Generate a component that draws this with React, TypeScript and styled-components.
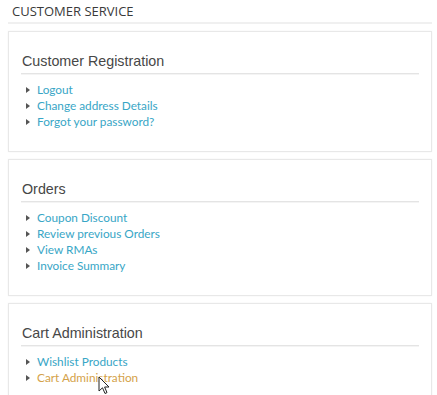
import React from "react";
import styled, { createGlobalStyle } from "styled-components";

const GlobalStyle = createGlobalStyle`
  html, body { margin: 0; padding: 0; background: #ffffff; }
  body { font-family: "Liberation Sans", Arial, sans-serif; }
`;

const Page = styled.div`
  position: relative;
  width: 437px;
  height: 395px;
  overflow: hidden;
  padding: 0 5px 0 8px;
  box-sizing: border-box;
`;

const Title = styled.div`
  font-family: "Open Sans", sans-serif;
  font-size: 13px;
  line-height: 18px;
  color: #3a3a3a;
  padding: 2px 4px 2px;
  border-bottom: 2px solid #f0f0f0;
  margin-bottom: 7px;
`;

const Panel = styled.section`
  border: 1px solid #e8e8e8;
  box-shadow: 0 0 2px rgba(0, 0, 0, 0.05);
  padding: 21px 12px 21px;
  margin-bottom: 7px;
`;

const Heading = styled.h2`
  margin: 0 0 8px;
  font-family: "Liberation Sans", Arial, sans-serif;
  font-weight: normal;
  font-size: 14.3px;
  line-height: 17px;
  color: #474747;
  padding: 0 0 3px 1px;
  border-bottom: 1px solid #e4e4e4;
  box-shadow: 0 1px 0 #f4f4f4;
`;

const List = styled.ul`
  list-style: none;
  margin: 0;
  padding: 0 0 0 5px;
`;

const Item = styled.li`
  display: flex;
  align-items: center;
  height: 16px;
  &::before {
    content: "";
    width: 0;
    height: 0;
    border-left: 4px solid #555;
    border-top: 3px solid transparent;
    border-bottom: 3px solid transparent;
    margin-right: 7px;
  }
`;

const Link = styled.a<{ $hover?: boolean }>`
  font-family: "Lato", sans-serif;
  font-weight: 400;
  font-size: 11.8px;
  line-height: 16px;
  color: ${(p) => (p.$hover ? "#d4a24a" : "#38a6c6")};
  text-decoration: none;
`;

const Cursor = styled.svg`
  position: absolute;
  left: 98px;
  top: 376px;
`;

const sections: { title: string; links: string[] }[] = [
  { title: "Customer Registration", links: ["Logout", "Change address Details", "Forgot your password?"] },
  { title: "Orders", links: ["Coupon Discount", "Review previous Orders", "View RMAs", "Invoice Summary"] },
  { title: "Cart Administration", links: ["Wishlist Products", "Cart Administration"] },
];

export default function App() {
  return (
    <>
      <GlobalStyle />
      <Page>
        <Title>CUSTOMER SERVICE</Title>
        {sections.map((s) => (
          <Panel key={s.title}>
            <Heading>{s.title}</Heading>
            <List>
              {s.links.map((l) => (
                <Item key={l}>
                  <Link href="#" $hover={s.title === "Cart Administration" && l === "Cart Administration"}>
                    {l}
                  </Link>
                </Item>
              ))}
            </List>
          </Panel>
        ))}
        <Cursor width="12" height="19" viewBox="0 0 12 19">
          <path d="M1 1 L1 15 L4.5 11.8 L7 17.5 L9 16.6 L6.6 11 L11 11 Z" fill="#fff" stroke="#222" strokeWidth="1" strokeLinejoin="round" />
        </Cursor>
      </Page>
    </>
  );
}
